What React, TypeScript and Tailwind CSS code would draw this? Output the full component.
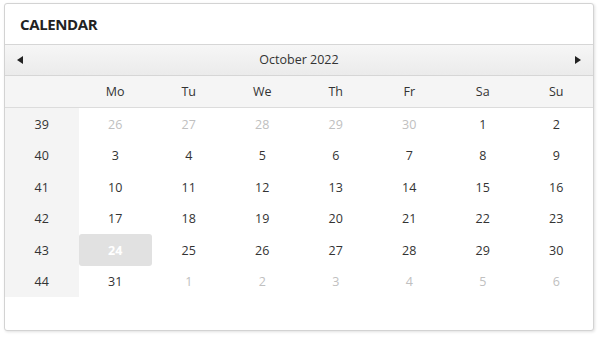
import React from 'react';

const dayNames = ['Mo', 'Tu', 'We', 'Th', 'Fr', 'Sa', 'Su'];

type Day = { n: number; muted?: boolean; selected?: boolean };

const weeks: { week: number; days: Day[] }[] = [
  { week: 39, days: [26, 27, 28, 29, 30].map(n => ({ n, muted: true } as Day)).concat([{ n: 1 }, { n: 2 }]) },
  { week: 40, days: [3, 4, 5, 6, 7, 8, 9].map(n => ({ n })) },
  { week: 41, days: [10, 11, 12, 13, 14, 15, 16].map(n => ({ n })) },
  { week: 42, days: [17, 18, 19, 20, 21, 22, 23].map(n => ({ n })) },
  { week: 43, days: [24, 25, 26, 27, 28, 29, 30].map(n => ({ n, selected: n === 24 })) },
  { week: 44, days: [{ n: 31 } as Day].concat([1, 2, 3, 4, 5, 6].map(n => ({ n, muted: true }))) },
];

export default function App() {
  return (
    <div
      className="w-[600px] h-[337px] bg-white pt-[3px] pl-[4px]"
      style={{ fontFamily: '"Open Sans", "Noto Sans", sans-serif' }}
    >
      <div className="w-[590px] h-[328px] bg-white border border-[#d3d3d3] rounded-[3px] shadow-[1px_1px_3px_rgba(0,0,0,0.12)] flex flex-col overflow-hidden">
        {/* Header */}
        <div className="h-[41px] flex items-center px-[15px] pt-[1px] border-b border-[#d6d6d6]">
          <h2 className="text-[15px] font-bold text-[#222] tracking-tight">CALENDAR</h2>
        </div>

        {/* Month nav */}
        <div className="h-[31px] flex items-center justify-between px-[12px] bg-gradient-to-b from-[#f6f6f6] to-[#ebebeb] border-b border-[#d6d6d6]">
          <svg width="6" height="8" viewBox="0 0 6 8">
            <path d="M6 0 L0 4 L6 8 Z" fill="#222" />
          </svg>
          <span className="text-[12.5px] text-[#333]">October 2022</span>
          <svg width="6" height="8" viewBox="0 0 6 8">
            <path d="M0 0 L6 4 L0 8 Z" fill="#222" />
          </svg>
        </div>

        {/* Day names */}
        <div className="h-[32px] grid grid-cols-8 items-center bg-[#f5f5f5] border-b border-[#dcdcdc] text-[12.5px] text-[#333] pt-[1px]">
          <div />
          {dayNames.map(d => (
            <div key={d} className="text-center">{d}</div>
          ))}
        </div>

        {/* Weeks */}
        <div className="flex flex-col">
          {weeks.map(w => (
            <div key={w.week} className="h-[31.5px] grid grid-cols-8 text-[12.5px]">
              <div className="bg-[#f4f4f4] flex items-center justify-center text-[#333] pt-[3px]">{w.week}</div>
              {w.days.map((d, i) => (
                <div
                  key={i}
                  className={
                    d.selected
                      ? 'flex items-center justify-center pt-[3px] bg-[#e1e1e1] rounded-[3px] text-white font-bold'
                      : `flex items-center justify-center pt-[3px] ${d.muted ? 'text-[#c0c0c0]' : 'text-[#333]'}`
                  }
                >
                  {d.n}
                </div>
              ))}
            </div>
          ))}
        </div>
      </div>
    </div>
  );
}
